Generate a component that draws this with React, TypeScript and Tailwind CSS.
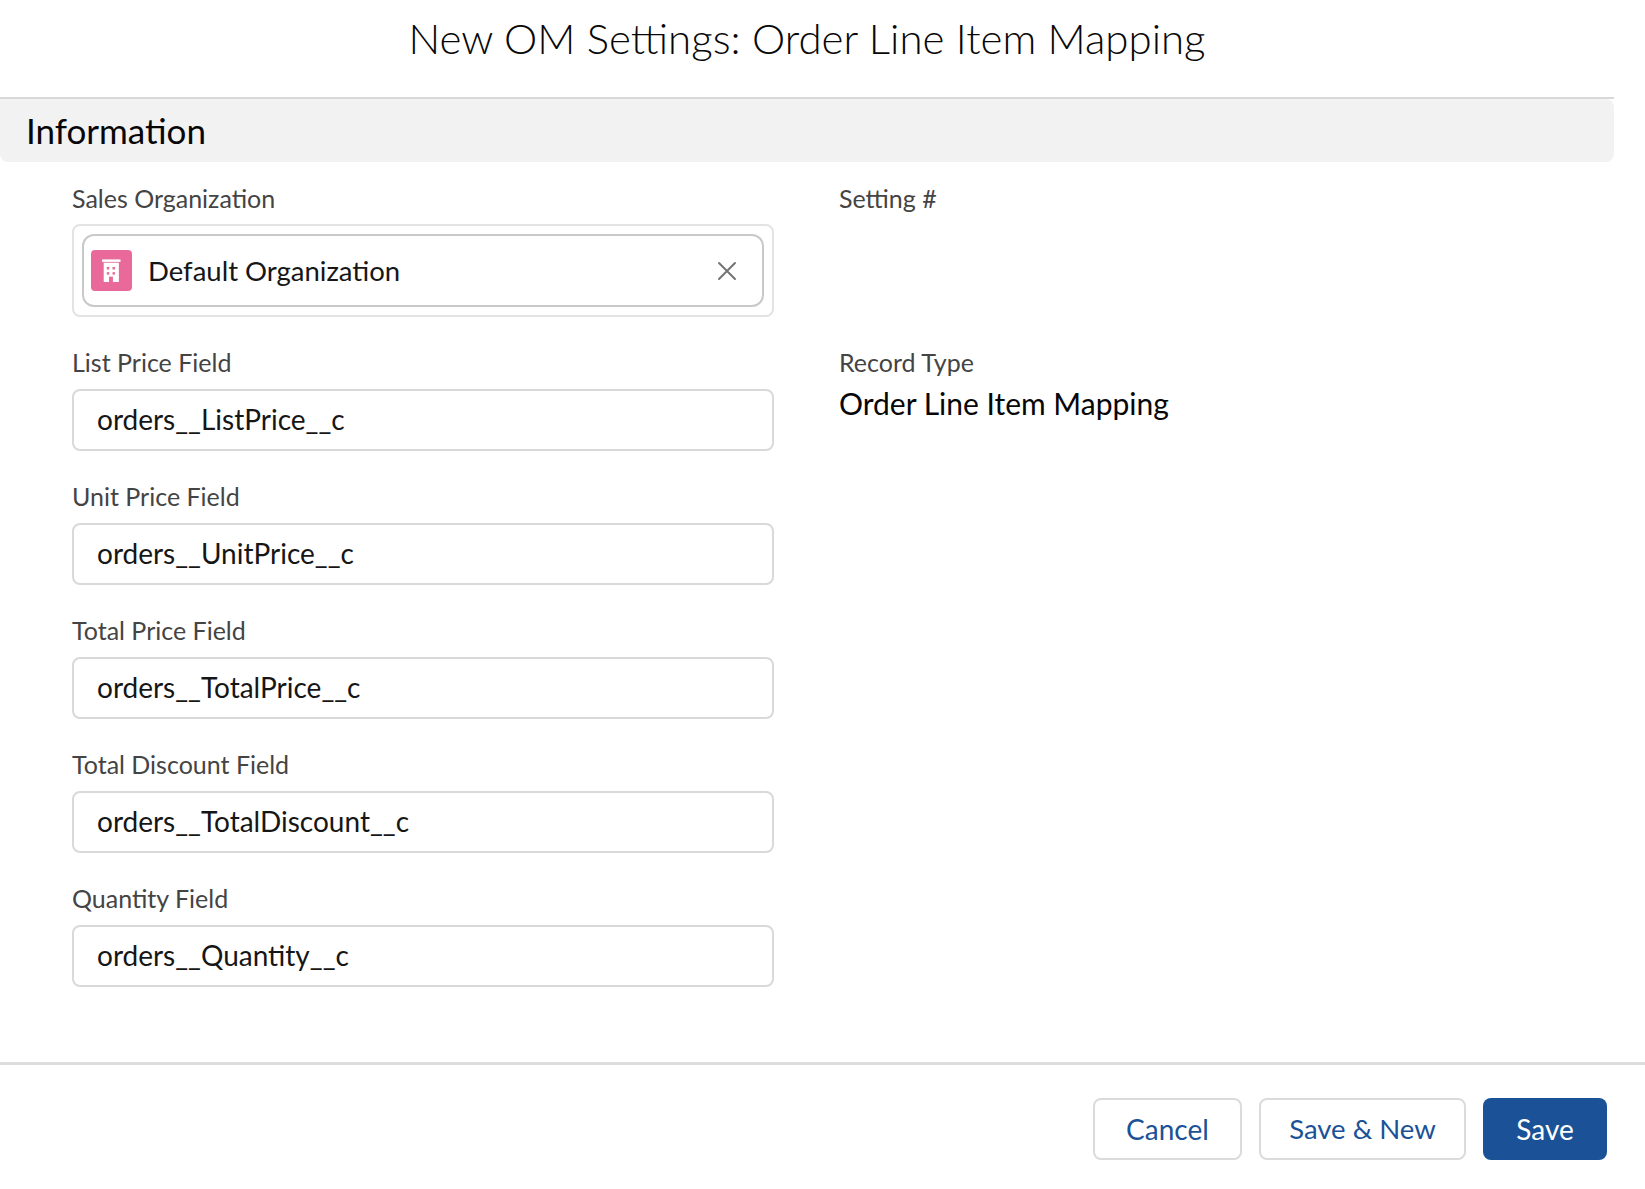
import { ReactNode } from 'react';

type Field = { label: string; value: string };

const fields: Field[] = [
  { label: 'List Price Field', value: 'orders__ListPrice__c' },
  { label: 'Unit Price Field', value: 'orders__UnitPrice__c' },
  { label: 'Total Price Field', value: 'orders__TotalPrice__c' },
  { label: 'Total Discount Field', value: 'orders__TotalDiscount__c' },
  { label: 'Quantity Field', value: 'orders__Quantity__c' },
];

const BuildingIcon = () => (
  <svg width="41" height="41" viewBox="0 0 40 40" aria-hidden="true">
    <rect x="0" y="0" width="40" height="40" rx="4" fill="#e8699a" />
    <rect x="10.8" y="9.2" width="18" height="2.4" fill="#fff" />
    <rect x="12.4" y="12.4" width="14.8" height="18.8" fill="#fff" />
    <rect x="15.4" y="16.6" width="2.4" height="2.4" fill="#e8699a" />
    <rect x="21" y="16.6" width="2.4" height="2.4" fill="#e8699a" />
    <rect x="15.4" y="21.6" width="2.4" height="2.4" fill="#e8699a" />
    <rect x="21" y="21.6" width="2.4" height="2.4" fill="#e8699a" />
    <rect x="17.6" y="26" width="3.8" height="5.2" fill="#e8699a" />
  </svg>
);

const CloseIcon = () => (
  <svg width="20" height="20" viewBox="0 0 20 20" aria-hidden="true">
    <path d="M2 2 L18 18 M18 2 L2 18" stroke="#747474" strokeWidth="2" strokeLinecap="round" />
  </svg>
);

function Label({ children }: { children: ReactNode }) {
  return <div className="text-[25px] leading-[32px] text-[#444444]">{children}</div>;
}

function TextInput({ value }: { value: string }) {
  return (
    <div className="mt-[11px] h-[62px] rounded-[8px] border-2 border-[#d9d9d9] bg-white pl-[23px] pb-[3px] flex items-center text-[28px] text-[#161616]">
      {value}
    </div>
  );
}

export default function App() {
  return (
    <div className="h-[1189px] w-full bg-white flex flex-col font-['Lato','Liberation_Sans',sans-serif]">
      <div className="w-[1614px] flex-1">
        <header className="h-[97px] pt-[13px] text-center">
          <h2 className="text-[42px] leading-[50px] font-light text-[#080707]">
            New OM Settings: Order Line Item Mapping
          </h2>
        </header>

        <section className="border-t-2 border-[#d8d8d8]">
          <h3 className="h-[63px] bg-[#f2f2f2] rounded-b-[8px] rounded-tr-[8px] flex items-center pl-[26px] text-[35px] text-[#080707]">
            Information
          </h3>

          <div className="grid grid-cols-[702px_1fr] gap-x-[65px] gap-y-[29px] pl-[72px] pt-[20px]">
            <div>
              <Label>Sales Organization</Label>
              <div className="mt-[10px] h-[93px] rounded-[8px] border-2 border-[#e3e3e3] p-[8px]">
                <div className="h-full rounded-[12px] border-2 border-[#c9c9c9] pl-[7px] pr-[25px] flex items-center">
                  <BuildingIcon />
                  <span className="ml-[16px] flex-1 text-[27.5px] text-[#161616]">Default Organization</span>
                  <CloseIcon />
                </div>
              </div>
            </div>
            <div>
              <Label>Setting #</Label>
            </div>

            {fields.map((f, i) => (
              <>
                <div key={f.label}>
                  <Label>{f.label}</Label>
                  <TextInput value={f.value} />
                </div>
                <div key={f.label + '-r'}>
                  {i === 0 && (
                    <>
                      <Label>Record Type</Label>
                      <div className="mt-[7px] text-[30px] leading-[36px] text-[#080707]">
                        Order Line Item Mapping
                      </div>
                    </>
                  )}
                </div>
              </>
            ))}
          </div>
        </section>
      </div>

      <footer className="border-t-[3px] border-[#dcdcdc] pt-[33px] pb-[29px] pr-[38px] flex justify-end gap-[17px]">
        <button
          type="button"
          className="w-[149px] h-[62px] rounded-[8px] border-2 border-[#dddbda] bg-white text-[28px] text-[#1b5297]"
        >
          Cancel
        </button>
        <button
          type="button"
          className="w-[207px] h-[62px] rounded-[8px] border-2 border-[#dddbda] bg-white text-[27.5px] text-[#1b5297]"
        >
          Save &amp; New
        </button>
        <button
          type="button"
          className="w-[124px] h-[62px] rounded-[8px] bg-[#1b5297] text-[28px] text-white"
        >
          Save
        </button>
      </footer>
    </div>
  );
}
